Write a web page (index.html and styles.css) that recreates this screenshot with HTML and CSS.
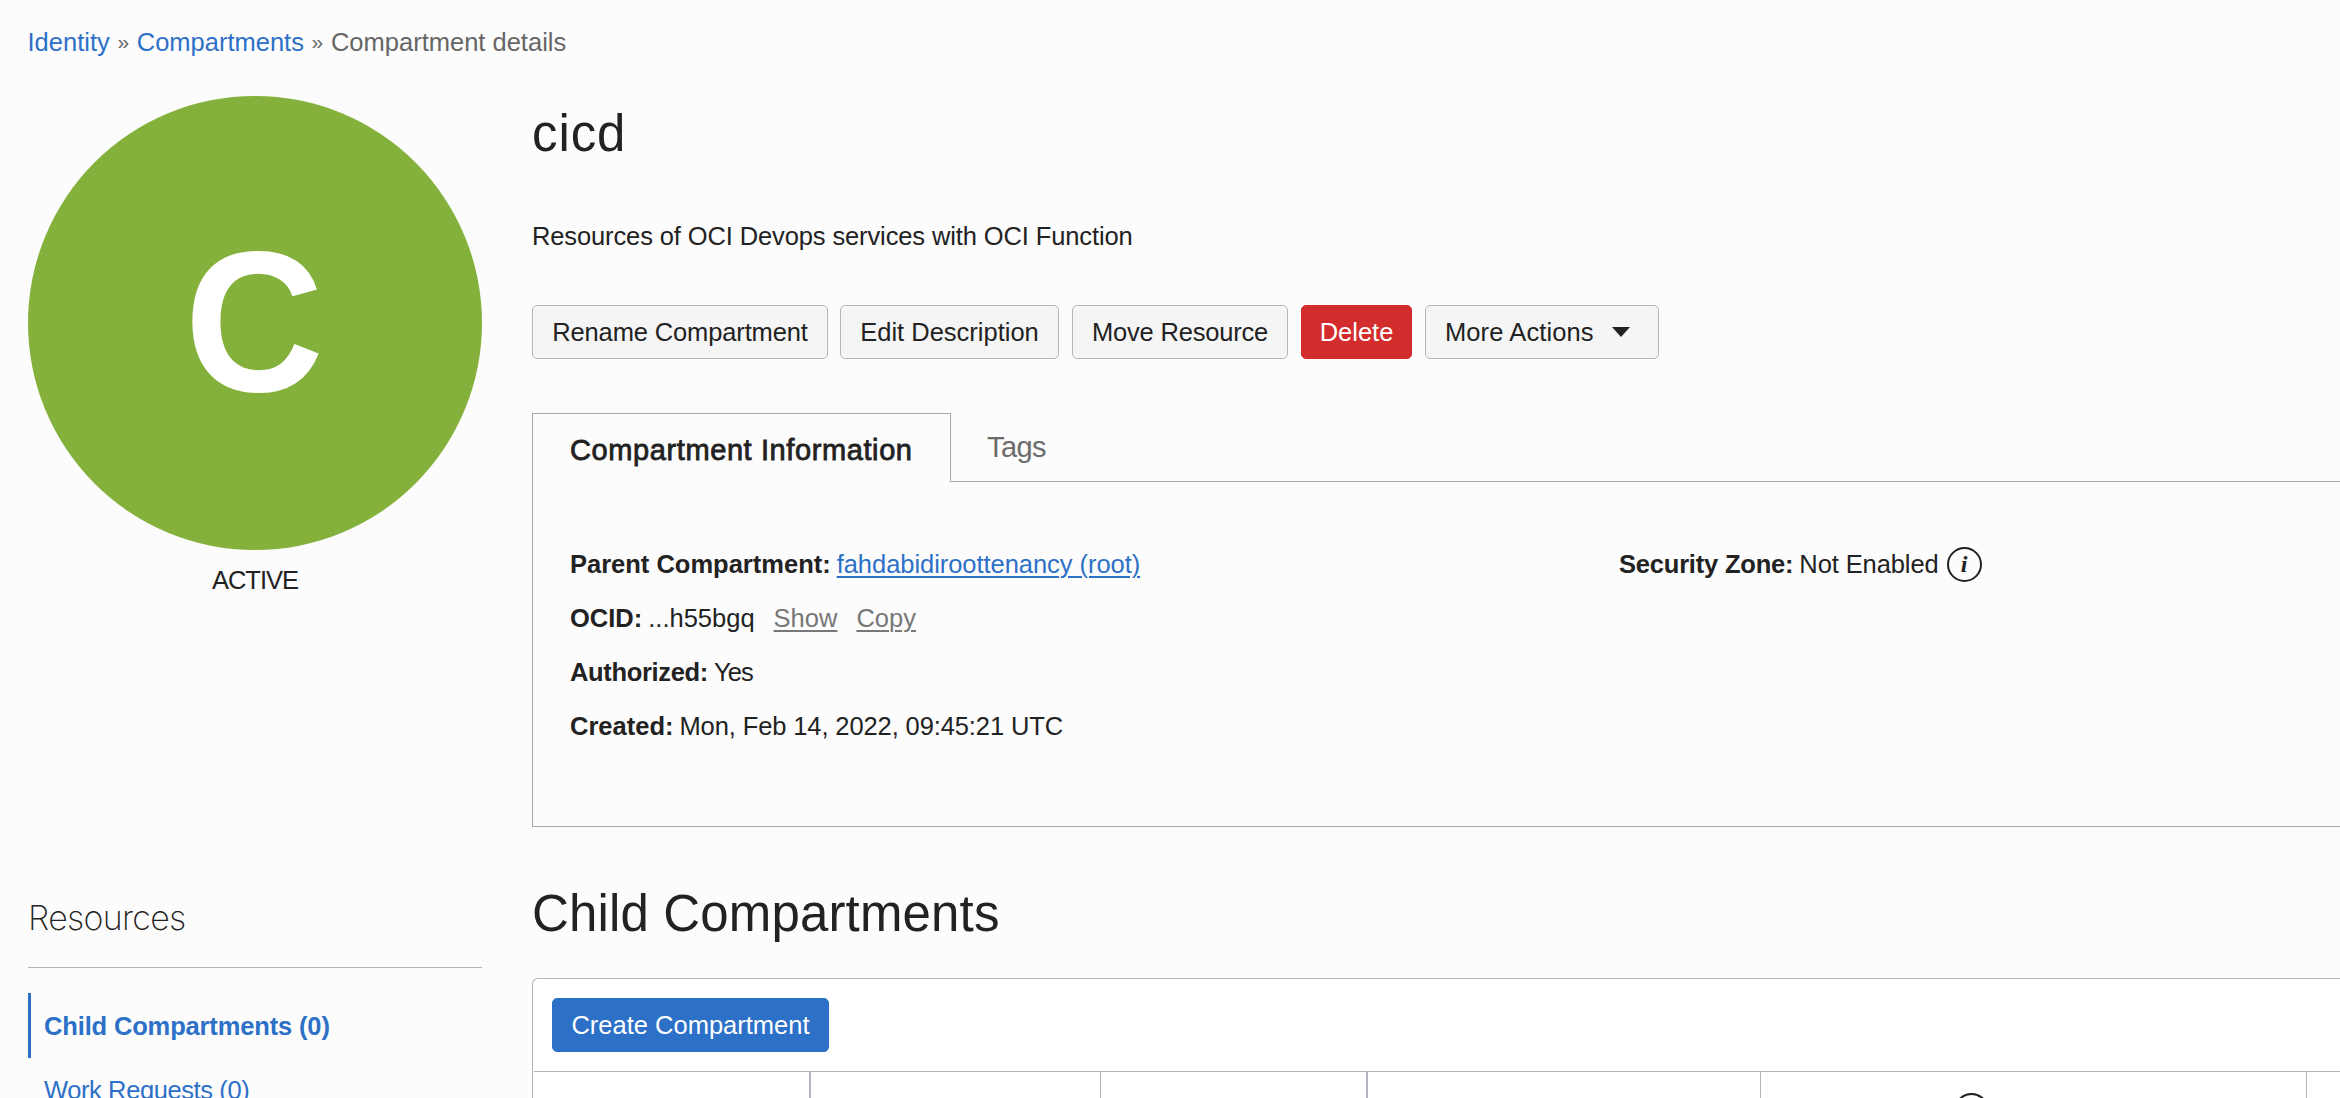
FILE: index.html
```html
<!DOCTYPE html>
<html lang="en">
<head>
<meta charset="utf-8">
<title>Compartment details</title>
<link rel="stylesheet" href="styles.css">
</head>
<body>
<nav class="breadcrumb"><a href="#">Identity</a><span class="sep">»</span><a href="#">Compartments</a><span class="sep">»</span><span class="crumb-here">Compartment details</span></nav>
<div class="layout">
  <aside class="side">
    <div class="status-circle"><span class="status-letter">C</span></div>
    <div class="status-label">ACTIVE</div>
    <h2 class="side-title">Resources</h2>
    <ul class="side-nav">
      <li class="side-item active"><a href="#">Child Compartments (0)</a></li>
      <li class="side-item"><a href="#">Work Requests (0)</a></li>
    </ul>
  </aside>
  <main class="main">
    <h1 class="title">cicd</h1>
    <p class="description">Resources of OCI Devops services with OCI Function</p>
    <div class="actions">
      <button class="btn rename">Rename Compartment</button>
      <button class="btn edit">Edit Description</button>
      <button class="btn move">Move Resource</button>
      <button class="btn danger">Delete</button>
      <button class="btn more"><span>More Actions</span><svg class="caret" viewBox="0 0 18 10"><path d="M0 0h18L9 10z"/></svg></button>
    </div>
    <div class="tabs">
      <div class="tab selected">Compartment Information</div>
      <div class="tab">Tags</div>
    </div>
    <section class="panel">
      <div class="col">
        <div class="row"><b>Parent Compartment:</b><a class="root-link" href="#">fahdabidiroottenancy (root)</a></div>
        <div class="row"><b>OCID:</b><span>...h55bgq</span><a class="quiet" href="#">Show</a><a class="quiet" href="#">Copy</a></div>
        <div class="row"><b class="authorized">Authorized:</b><span class="yes">Yes</span></div>
        <div class="row"><b>Created:</b><span class="date">Mon, Feb 14, 2022, 09:45:21 UTC</span></div>
      </div>
      <div class="col">
        <div class="row"><b class="zone-label">Security Zone:</b><span class="zone">Not Enabled</span><span class="info">i</span></div>
      </div>
    </section>
    <h2 class="section-title">Child Compartments</h2>
    <section class="table">
      <div class="toolbar"><button class="btn primary">Create Compartment</button></div>
      <div class="thead">
        <div class="th wide"></div>
        <div class="th"></div>
        <div class="th wide"></div>
        <div class="th"></div>
        <div class="th"><span class="info"></span></div>
        <div class="th"></div>
      </div>
    </section>
  </main>
</div>
</body>
</html>
```
FILE: styles.css
```css
* { box-sizing: border-box; }
html, body { height: 1098px; overflow: hidden; }
body {
  margin: 0;
  background: #fcfcfc;
  color: #222;
  font-family: "Liberation Sans", Arial, sans-serif;
  font-size: 25.5px;
  line-height: 30px;
}
h1, h2, p, ul { margin: 0; padding: 0; font-weight: 400; }
ul { list-style: none; }
a { color: #2d70c8; text-decoration: none; }
.breadcrumb { display: flex; height: 96px; padding: 27px 0 0 27.5px; color: #666; white-space: nowrap; }
.sep { width: 27px; text-align: center; font-size: 21px; }
.layout { display: flex; gap: 50px; padding-left: 28px; }
.side { width: 454px; flex: none; }
.status-circle {
  display: flex; align-items: center; justify-content: center;
  height: 454px; border-radius: 50%; background: #84b03c; color: #fff;
}
.status-letter { font-size: 200px; font-weight: 700; line-height: 230px; transform: translate(-1px, -1px) scaleX(.965); }
.status-label { margin-top: 15px; text-align: center; letter-spacing: -1px; }
.side-title {
  height: 373px; padding-top: 301px; border-bottom: 1px solid #b1b5bd;
  font-family: Inter, sans-serif; font-weight: 200; font-size: 34px; line-height: 44px; letter-spacing: -.7px;
}
.side-nav { padding-top: 25px; }
.side-item { height: 65px; padding: 17px 0 0 16px; letter-spacing: -.4px; }
.side-item.active { padding: 18px 0 0 13px; border-left: 3px solid #2d70c8; font-weight: 700; letter-spacing: -.15px; }
.main { flex: 1; min-width: 0; }
.title { height: 125px; padding-top: 9px; font-size: 51px; line-height: 58px; letter-spacing: .9px; }
.description { height: 84px; letter-spacing: -.12px; }
.actions { display: flex; gap: 13px; }
.btn {
  height: 54px; padding: 0; border: 1px solid #b1b5bd; border-radius: 5px;
  background: #f5f5f5; color: #222; font: inherit; white-space: nowrap;
}
.rename { width: 296px; margin-right: -1px; letter-spacing: -.13px; }
.edit { width: 219px; }
.move { width: 216px; letter-spacing: -.2px; }
.danger { width: 111px; background: #d32c2c; border-color: #d32c2c; color: #fff; }
.more { width: 234px; display: flex; align-items: center; padding-left: 19px; gap: 18px; letter-spacing: .1px; }
.caret { width: 18px; height: 10px; fill: #222; }
.tabs { display: flex; height: 69px; margin-top: 54px; }
.tab { flex: 1; padding: 19px 0 0 36px; border-bottom: 1px solid #a9a9a9; font-size: 29px; color: #6b6b6b; line-height: 30px; letter-spacing: -.6px; }
.tab.selected {
  flex: none; width: 419px; padding: 21px 0 0 37px; color: #222; letter-spacing: .6px;
  border: 1px solid #a9a9a9; border-bottom: 0; -webkit-text-stroke: .8px #222;
}
.panel {
  display: flex; height: 345px; padding: 55px 0 0 37px;
  border: solid #a9a9a9; border-width: 0 0 1px 1px;
}
.col { flex: 1; min-width: 0; }
.col:first-child { width: 1049px; flex: none; }
.row { display: flex; height: 54px; align-items: center; white-space: nowrap; }
.row b { margin-right: 6px; }
.root-link, .quiet { text-decoration: underline; text-decoration-thickness: 2px; text-underline-offset: 3px; }
.root-link { letter-spacing: -.05px; }
.quiet { color: #777; margin-left: 19px; }
.authorized { letter-spacing: -.33px; }
.yes { letter-spacing: -.9px; }
.date { letter-spacing: -.11px; }
.zone-label { letter-spacing: -.2px; }
.zone { margin-right: 8px; letter-spacing: -.1px; }
.info {
  display: inline-flex; align-items: center; justify-content: center;
  width: 35px; height: 35px; flex: none; border: 2px solid #222; border-radius: 50%;
  font: italic 700 24px/28px "Liberation Serif", serif;
}
.section-title { height: 151px; padding-top: 58px; font-size: 51px; line-height: 58px; letter-spacing: .15px; }
.table { height: 130px; border: solid #b1b5bd; border-width: 1px 0 0 1px; border-radius: 6px 0 0 0; background: #fff; }
.toolbar { height: 93px; margin-left: 1px; padding: 19px 0 0 18px; border-bottom: 1px solid #b1b5bd; }
.primary { width: 277px; background: #2d70c8; border-color: #2d70c8; color: #fff; }
.thead { display: grid; grid-template-columns: 278px 290px 267px 393px 546px 1fr; height: 40px; }
.th { border-right: 1px solid #b1b5bd; }
.th.wide { border-right-width: 2px; }
.th .info { margin: 21px 0 0 193px; }
.th:last-child { border: 0; }
```
